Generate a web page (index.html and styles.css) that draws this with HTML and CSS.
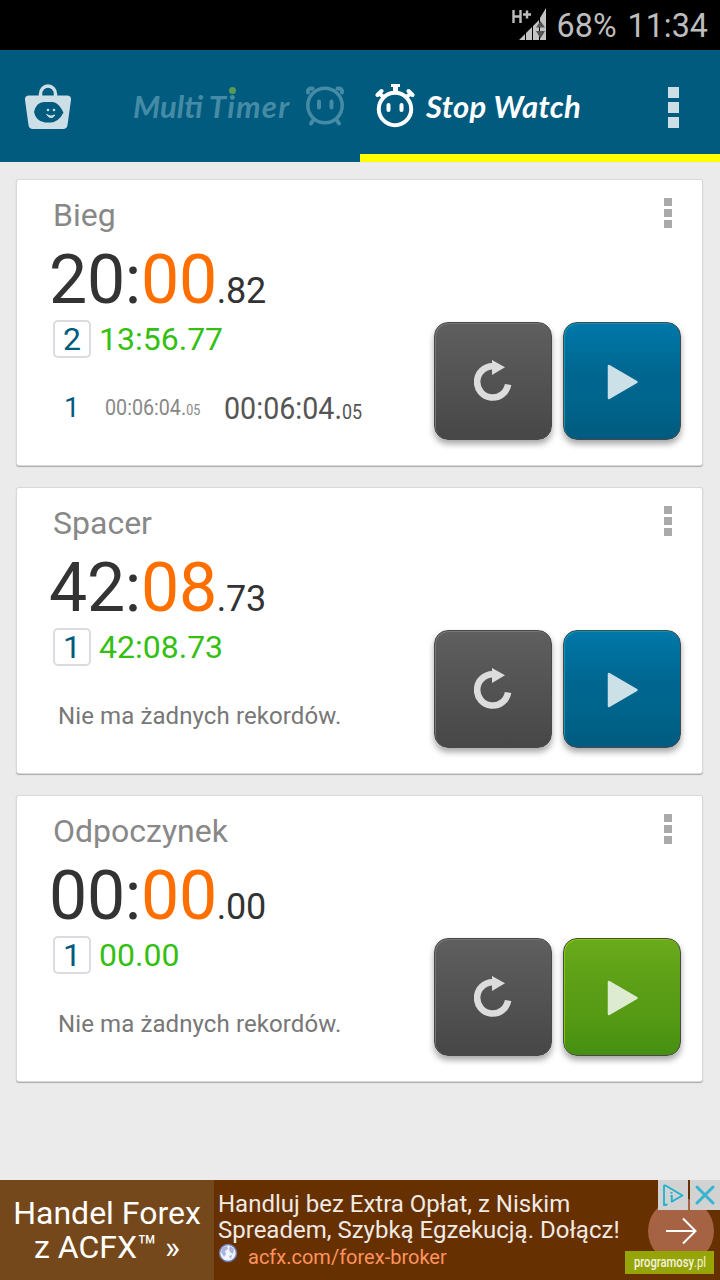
FILE: index.html
```html
<!DOCTYPE html>
<html lang="pl">
<head>
    <meta charset="UTF-8">
    <meta name="viewport" content="width=device-width, initial-scale=1.0">
    <title>Stop Watch</title>
    <link rel="stylesheet" href="styles.css">
</head>
<body>
    <!-- Icons used more than once -->
    <svg class="defs" width="0" height="0">
        <symbol id="reset" viewBox="0 0 40 44">
            <path d="M18.500 6.300A15.600 15.600 0 1 0 34.100 24.500" fill="none" stroke="#dcdcdc" stroke-width="6.600"/>
            <path d="M18 0V15L31 7.300Z" fill="#dcdcdc"/>
        </symbol>
        <symbol id="play" viewBox="0 0 32 36">
            <path d="M2 2V34L29.500 18Z" stroke-width="2.500" stroke-linejoin="round"/>
        </symbol>
    </svg>

    <div class="status-bar">
        <svg class="signal" width="36" height="34" viewBox="0 0 36 34">
            <path d="M1.500 3V16M8.500 3V16M1.500 9.500H8.500M11 7.500H19M15 3.500V11.500" fill="none" stroke="#bdbdbd" stroke-width="2.400"/>
            <path d="M7 33L13 27V33ZM14 26L20 20V33H14ZM21 19L27 13V33H21ZM28 11L34 1V33H28Z" fill="#c4c4c4"/>
            <path d="M24 20.500L28.500 14L33 20.500ZM24 24L28.500 31.500L33 24Z" fill="#555"/>
        </svg>
        <span class="battery">68%</span>
        <span class="clock">11:34</span>
    </div>

    <header class="tabs">
        <div class="tab">
            <svg class="bag" width="48" height="48" viewBox="0 0 48 48">
                <path d="M16.500 16V11a7.500 8 0 0 1 15 0V16" fill="none" stroke="#ccdfe6" stroke-width="3.500"/>
                <path d="M5 12.500H43Q47.500 12.500 47 17L43.500 42Q43 46 39 46H9Q5 46 4.500 42L1 17Q.5 12.500 5 12.500Z" fill="#ccdfe6"/>
                <path d="M10 29Q12 19.500 20 19H29Q35 20 39.500 29.500Q35 38.500 27 39.500H21Q12 38.500 10 29Z" fill="#005b7f"/>
                <circle cx="24" cy="27" r="1.300" fill="#ccdfe6"/>
                <circle cx="30" cy="27" r="1.300" fill="#ccdfe6"/>
                <path d="M22.500 31.500Q27 37.500 31 32Q27 34.500 22.500 31.500" fill="#ccdfe6" stroke="#ccdfe6"/>
            </svg>
            <span class="title timer"><span>Multi</span> <span class="word">T<span class="dotted">i</span>mer</span></span>
            <svg class="alarm" width="40" height="42" viewBox="0 0 40 42">
                <g fill="none" stroke="#468ba5" stroke-linecap="round">
                    <circle cx="20" cy="20.500" r="17.200" stroke-width="3.500"/>
                    <path d="M14 16.500V22.500M26.500 16.500V22.500" stroke-width="4"/>
                    <path d="M3 7.500Q2.500 3 7.500 3.500M32.500 3.500Q37.500 3 37 7.500M8 35.500L6 38.500M32 35.500L34 38.500" stroke-width="4"/>
                </g>
            </svg>
        </div>
        <div class="tab active">
            <svg class="stopwatch" width="40" height="46" viewBox="0 0 40 46">
                <g fill="none" stroke="#fff">
                    <circle cx="20" cy="26" r="16.200" stroke-width="4"/>
                    <path d="M13.500 22V27M26.500 22V27" stroke-width="4" stroke-linecap="round"/>
                    <path d="M16 2.500H25" stroke-width="3"/>
                    <path d="M20.500 3V9" stroke-width="5"/>
                    <path d="M8.500 14L4.500 10.500M31.500 14L35.500 10.500M2.500 12L6.500 8M33.500 8L37.500 12" stroke-width="4" stroke-linecap="round"/>
                </g>
            </svg>
            <span class="title watch">Stop Watch</span>
            <div class="dots large"><i></i><i></i><i></i></div>
        </div>
    </header>

    <main class="list">
        <section class="card">
            <div class="info">
                <div class="name">Bieg</div>
                <div class="time">20:<b>00</b><small>.82</small></div>
                <div class="lap"><span class="count">2</span>13:56.77</div>
                <div class="record">
                    <span class="number">1</span>
                    <span class="split">00:06:04.<small>05</small></span>
                    <span class="total">00:06:04.<small>05</small></span>
                </div>
            </div>
            <div class="side">
                <div class="dots"><i></i><i></i><i></i></div>
                <div class="buttons">
                    <div class="button"><svg width="40" height="44"><use href="#reset"/></svg></div>
                    <div class="button blue"><svg width="32" height="36"><use href="#play"/></svg></div>
                </div>
            </div>
        </section>

        <section class="card">
            <div class="info">
                <div class="name">Spacer</div>
                <div class="time">42:<b>08</b><small>.73</small></div>
                <div class="lap"><span class="count">1</span>42:08.73</div>
                <div class="empty">Nie ma żadnych rekordów.</div>
            </div>
            <div class="side">
                <div class="dots"><i></i><i></i><i></i></div>
                <div class="buttons">
                    <div class="button"><svg width="40" height="44"><use href="#reset"/></svg></div>
                    <div class="button blue"><svg width="32" height="36"><use href="#play"/></svg></div>
                </div>
            </div>
        </section>

        <section class="card">
            <div class="info">
                <div class="name">Odpoczynek</div>
                <div class="time">00:<b>00</b><small>.00</small></div>
                <div class="lap"><span class="count">1</span>00.00</div>
                <div class="empty">Nie ma żadnych rekordów.</div>
            </div>
            <div class="side">
                <div class="dots"><i></i><i></i><i></i></div>
                <div class="buttons">
                    <div class="button"><svg width="40" height="44"><use href="#reset"/></svg></div>
                    <div class="button green"><svg width="32" height="36"><use href="#play"/></svg></div>
                </div>
            </div>
        </section>
    </main>

    <footer class="ad">
        <div class="ad-title">Handel Forex<br>z ACFX™ »</div>
        <div class="ad-body">
            <div class="ad-text">Handluj bez Extra Opłat, z Niskim<br>Spreadem, Szybką Egzekucją. Dołącz!</div>
            <div class="ad-link">
                <svg width="20" height="20" viewBox="0 0 20 20">
                    <circle cx="10" cy="10" r="8.500" fill="#f1f4fc" stroke="#6b78ac" stroke-width="1.500"/>
                    <path d="M4 4L9 3L10 6L7 8L8 11L6 14L3 9ZM12 3L16 6L15 11L12 9L11 6ZM11 13L14 12L13 16Z" fill="#a9b4d8"/>
                </svg>
                acfx.com/forex-broker
            </div>
        </div>
        <div class="ad-arrow">
            <svg width="32" height="28" viewBox="0 0 32 28">
                <path d="M1 14H30M18 1.500L30.500 14L18 26.500" fill="none" stroke="#fff" stroke-width="2"/>
            </svg>
        </div>
        <div class="ad-corner">
            <span>
                <svg width="30" height="30" viewBox="0 0 30 30" fill="none" stroke="#1bb1d0" stroke-width="1.800">
                    <path d="M9.500 24.500L6 25V6Q6 5 7.500 5.500L24.500 15.500L13 22" stroke-linejoin="round"/>
                    <path d="M13.500 12V13.800M12.500 16H13.800V21H16"/>
                </svg>
            </span>
            <span>
                <svg width="30" height="30" viewBox="0 0 30 30">
                    <path d="M7 7L23 23M23 7L7 23" stroke="#35b5d0" stroke-width="3" stroke-linecap="round"/>
                </svg>
            </span>
        </div>
        <div class="watermark"><span><b>programosy</b>.pl</span></div>
    </footer>
</body>
</html>
```
FILE: styles.css
```css
* {
    box-sizing: border-box;
}

body {
    width: 720px;
    height: 1280px;
    margin: 0;
    display: flex;
    flex-direction: column;
    overflow: hidden;
    background-color: #ebebeb;
    font-family: Roboto, sans-serif;
}

svg {
    display: block;
    flex: none;
}

.defs {
    position: absolute;
}

/* Status bar */
.status-bar {
    height: 50px;
    flex: none;
    display: flex;
    align-items: center;
    justify-content: flex-end;
    padding-right: 12px;
    background: #000;
    color: #bdbdbd;
    font-size: 32.3px;
    line-height: 50px;
}

.signal {
    margin: -3px 9px 0 0;
}

.battery {
    margin-right: 11px;
}

.battery,
.clock {
    padding-top: 2px;
}

/* Tabs */
.tabs {
    height: 112px;
    flex: none;
    display: flex;
    background: #005b7f;
}

.tab {
    width: 360px;
    display: flex;
    align-items: center;
    border-bottom: 8px solid #005b7f;
    padding-top: 9px;
}

.tab.active {
    border-bottom-color: #ff0;
}

.title {
    margin-top: -2px;
    font-family: Lato, sans-serif;
    font-weight: bold;
    font-style: italic;
    white-space: nowrap;
}

.bag {
    margin: 0 0 0 24px;
}

.timer {
    display: flex;
    width: 160px;
    margin-left: 61px;
    font-size: 31px;
    color: #468ba5;
}

.word {
    margin-left: 6px;
    letter-spacing: 1.2px;
}

.dotted {
    position: relative;
}

.dotted::after {
    content: '';
    position: absolute;
    left: 2px;
    top: 0;
    width: 7px;
    height: 7px;
    border-radius: 50%;
    background: #569a55;
}

.alarm {
    margin: -1px 0 0 12px;
}

.stopwatch {
    margin: -2px 0 0 15px;
}

.watch {
    width: 155px;
    margin-left: 11px;
    font-size: 31px;
    letter-spacing: .3px;
    color: #fff;
}

.dots {
    display: flex;
    flex-direction: column;
    gap: 3px;
}

.dots i {
    width: 8px;
    height: 8px;
    background: #aaa;
}

.dots.large {
    gap: 4px;
    margin: 1px 0 0 87px;
}

.dots.large i {
    width: 11px;
    height: 11px;
    background: #ccdfe6;
}

/* Cards */
.list {
    flex: 1;
    display: flex;
    flex-direction: column;
    gap: 23px;
    padding: 18px 18px 0 17px;
}

.card {
    height: 285px;
    display: flex;
    justify-content: space-between;
    background: #fff;
    border-radius: 2px;
    box-shadow: 0 0 0 1px #d9d9d9, 0 1px 1px 1px #aaa;
}

.info {
    padding: 16px 0 0 36px;
}

.name {
    font-size: 32px;
    line-height: 38px;
    color: #888;
}

.time {
    height: 80px;
    margin: 6px 0 0 -4px;
    font-size: 68px;
    line-height: 80px;
    letter-spacing: -.3px;
    color: #333;
}

.time b {
    font-weight: normal;
    color: #ff6f00;
}

.time small {
    font-size: 36px;
}

.lap {
    display: flex;
    font-size: 32px;
    line-height: 38px;
    color: #34bf12;
}

.count {
    width: 38px;
    height: 38px;
    margin-right: 8px;
    border: 2px solid #dcdce0;
    border-radius: 5px;
    text-align: center;
    line-height: 34px;
    color: #005b7f;
}

.record {
    display: flex;
    align-items: center;
    height: 38px;
    margin-top: 31px;
    line-height: 38px;
}

.record small {
    line-height: 0;
}

.number {
    width: 52px;
    padding-left: 11px;
    font-size: 28px;
    color: #005b7f;
}

.split,
.total {
    transform: scaleX(.895);
    transform-origin: left;
    white-space: nowrap;
}

.split {
    width: 119px;
    font-size: 22px;
    color: #888;
}

.split small {
    font-size: 14px;
}

.total {
    font-size: 32px;
    color: #555;
}

.total small {
    font-size: 20px;
}

.empty {
    margin: 36px 0 0 5px;
    font-size: 24px;
    line-height: 28px;
    letter-spacing: .1px;
    color: #777;
}

.side {
    display: flex;
    flex-direction: column;
    align-items: flex-end;
    justify-content: space-between;
    padding: 18px 21px 25px 0;
}

.side .dots {
    margin-right: 9px;
}

.buttons {
    display: flex;
    gap: 11px;
}

.button {
    width: 118px;
    height: 118px;
    display: flex;
    align-items: center;
    justify-content: center;
    padding: 1px 0 0 1px;
    border: 1px solid #484848;
    border-radius: 14px;
    background: linear-gradient(#5f5f5f, #545454 45%, #474747);
    box-shadow: 0 4px 6px rgba(0, 0, 0, 0.35), inset 1px 1px 0 #777;
}

.button.blue {
    background: linear-gradient(#0078a9, #00668f 45%, #00658d 65%, #005b7f);
    box-shadow: 0 4px 6px rgba(0, 0, 0, 0.35), inset 1px 1px 0 #0097b8;
    fill: #cce0e8;
    stroke: #cce0e8;
}

.button.green {
    background: linear-gradient(#6aab1b, #5a9d16 45%, #579b14 65%, #468f12);
    box-shadow: 0 4px 6px rgba(0, 0, 0, 0.35), inset 1px 1px 0 #84c900;
    fill: #ddebd0;
    stroke: #ddebd0;
}

/* Ad banner */
.ad {
    position: relative;
    height: 100px;
    flex: none;
    display: flex;
    background: #663000;
    color: #fff;
}

.ad-title {
    width: 214px;
    padding-top: 16px;
    background: #75481b;
    text-align: center;
    font-size: 32px;
    line-height: 34px;
}

.ad-body {
    padding: 11px 0 0 4px;
}

.ad-text {
    font-size: 24px;
    line-height: 26px;
    color: #f0eae5;
    white-space: nowrap;
}

.ad-link {
    display: flex;
    gap: 10px;
    font-size: 20px;
    line-height: 28px;
    color: #ff935f;
}

.ad-arrow {
    position: absolute;
    left: 648px;
    top: 18px;
    width: 66px;
    height: 66px;
    display: flex;
    align-items: center;
    justify-content: center;
    border-radius: 50%;
    background: #a56343;
}

.ad-corner {
    position: absolute;
    top: 0;
    right: 0;
    display: flex;
    gap: 2px;
}

.ad-corner span {
    background: #d2d2d2;
}

.watermark {
    position: absolute;
    right: 6px;
    bottom: 6px;
    width: 89px;
    height: 23px;
    background: #95a407;
    font-size: 14px;
    line-height: 22px;
    text-align: center;
    color: #f5f2dc;
}

.watermark span {
    display: inline-block;
    transform: scaleX(.8);
    margin: 0 -10px;
}

.watermark b {
    font-weight: 500;
}
```
